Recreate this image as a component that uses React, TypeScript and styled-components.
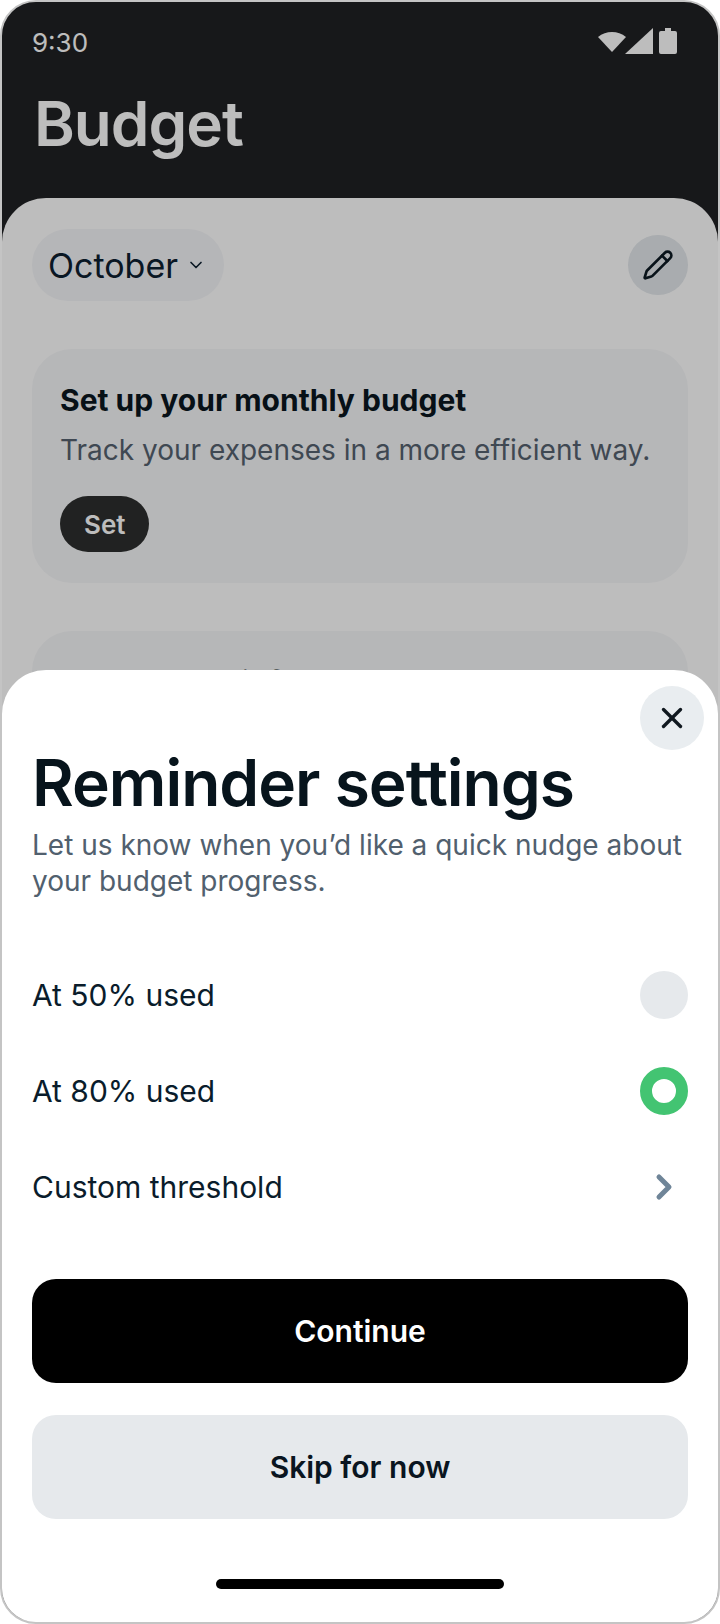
import React from 'react';
import styled, { createGlobalStyle } from 'styled-components';
import { ChevronDown, ChevronRight, Pencil, X } from 'lucide-react';

const GlobalStyle = createGlobalStyle`
  html, body {
    margin: 0;
    padding: 0;
    background: #fff;
    font-family: Inter, "Noto Sans", sans-serif;
  }
  * {
    box-sizing: border-box;
  }
`;

const Phone = styled.div`
  position: relative;
  width: 720px;
  height: 1624px;
  overflow: hidden;
  border: 2px solid #c4c4c4;
  border-radius: 36px;
  background: #202124;
`;

const Page = styled.div`
  display: flex;
  flex-direction: column;
  height: 100%;
`;

const StatusBar = styled.div`
  display: flex;
  align-items: center;
  justify-content: space-between;
  padding: 22px 38px 0 30px;
  height: 58px;
  color: #fff;
`;

const Clock = styled.span`
  font-size: 26px;
  font-weight: 400;
`;

const Header = styled.h1`
  margin: 0;
  padding: 26px 32px 0;
  height: 138px;
  font-size: 62px;
  line-height: 76px;
  font-weight: 600;
  letter-spacing: -1px;
  color: #fff;
`;

const Sheet = styled.div`
  flex: 1;
  padding: 31px 30px 0;
  background: #ffffff;
  border-radius: 44px 44px 0 0;
`;

const SheetTop = styled.div`
  display: flex;
  align-items: center;
  justify-content: space-between;
  margin-bottom: 48px;
`;

const MonthPill = styled.div`
  display: flex;
  align-items: center;
  gap: 8px;
  height: 72px;
  padding: 0 18px 0 16px;
  border-radius: 36px;
  background: #f5f6f9;
  font-size: 34px;
  color: #0d2030;
`;

const EditButton = styled.div`
  display: flex;
  align-items: center;
  justify-content: center;
  width: 60px;
  height: 60px;
  border-radius: 50%;
  background: #e4e8ec;
  color: #0d1a24;
`;

const Card = styled.div`
  padding: 32px 28px 28px;
  margin-bottom: 48px;
  height: 234px;
  border-radius: 40px;
  background: #f6f7f9;
`;

const CardTitle = styled.div`
  font-size: 30px;
  line-height: 38px;
  font-weight: 700;
  color: #0a1620;
`;

const CardText = styled.div`
  margin-top: 13px;
  font-size: 28px;
  line-height: 36px;
  color: #55626f;
`;

const SetButton = styled.div`
  display: inline-flex;
  align-items: center;
  height: 56px;
  margin-top: 28px;
  padding: 0 24px;
  border-radius: 28px;
  background: #2d2f2e;
  color: #fff;
  font-size: 26px;
  font-weight: 600;
`;

const Scrim = styled.div`
  position: absolute;
  inset: 0;
  background: rgba(0, 0, 0, 0.26);
`;

const Modal = styled.div`
  position: absolute;
  left: 0;
  right: 0;
  top: 668px;
  bottom: 0;
  display: flex;
  flex-direction: column;
  padding: 0 30px;
  background: #fff;
  border-radius: 44px 44px 0 0;
`;

const CloseButton = styled.div`
  position: absolute;
  top: 16px;
  right: 14px;
  display: flex;
  align-items: center;
  justify-content: center;
  width: 64px;
  height: 64px;
  border-radius: 50%;
  background: #e9edf0;
  color: #10181f;
`;

const ModalTitle = styled.h2`
  margin: 78px 0 0;
  font-size: 64px;
  line-height: 70px;
  font-weight: 600;
  letter-spacing: -1px;
  color: #07141c;
`;

const ModalText = styled.p`
  margin: 9px 0 0;
  font-size: 28px;
  line-height: 36px;
  color: #51606e;
`;

const Options = styled.div`
  display: flex;
  flex-direction: column;
  margin-top: 48px;
`;

const OptionRow = styled.div`
  display: flex;
  align-items: center;
  justify-content: space-between;
  height: 96px;
  font-size: 30px;
  color: #0a1c2b;
`;

const Radio = styled.span<{ $on?: boolean }>`
  width: 48px;
  height: 48px;
  border-radius: 50%;
  background: ${p => (p.$on ? '#fff' : '#e6e9ec')};
  border: ${p => (p.$on ? '12px solid #43c472' : 'none')};
`;

const ChevronSlot = styled.span`
  display: flex;
  justify-content: center;
  width: 48px;
  color: #6f8598;
`;

const Actions = styled.div`
  display: flex;
  flex-direction: column;
  gap: 32px;
  margin-top: 44px;
`;

const ActionButton = styled.div<{ $primary?: boolean }>`
  display: flex;
  align-items: center;
  justify-content: center;
  height: 104px;
  border-radius: 24px;
  font-size: 30px;
  font-weight: 600;
  background: ${p => (p.$primary ? '#000' : '#e6e9ec')};
  color: ${p => (p.$primary ? '#fff' : '#0a1520')};
`;

const HomeBar = styled.div`
  position: absolute;
  left: 214px;
  bottom: 33px;
  width: 288px;
  height: 10px;
  border-radius: 5px;
  background: #000;
`;

const StatusIcons = () => (
  <svg width="84" height="28" viewBox="0 0 84 28" fill="#fff">
    <path d="M2 9c4-3.500 9-5 14-5s10 1.500 14 5L16 24z" />
    <path d="M29 26 L57 0v26z" />
    <path d="M65 26a2 2 0 0 1-2-2V5a2 2 0 0 1 2-2h4V0h6v3h4a2 2 0 0 1 2 2v19a2 2 0 0 1-2 2z" />
  </svg>
);

const App: React.FC = () => (
  <>
    <GlobalStyle />
    <Phone>
      <Page>
        <StatusBar>
          <Clock>9:30</Clock>
          <StatusIcons />
        </StatusBar>
        <Header>Budget</Header>
        <Sheet>
          <SheetTop>
            <MonthPill>
              October
              <ChevronDown size={20} strokeWidth={2} />
            </MonthPill>
            <EditButton>
              <Pencil size={32} strokeWidth={2} />
            </EditButton>
          </SheetTop>
          <Card>
            <CardTitle>Set up your monthly budget</CardTitle>
            <CardText>Track your expenses in a more efficient way.</CardText>
            <SetButton>Set</SetButton>
          </Card>
          <Card>
            <CardTitle>Set planned inflows</CardTitle>
          </Card>
        </Sheet>
      </Page>
      <Scrim />
      <Modal>
        <CloseButton>
          <X size={34} strokeWidth={2.4} />
        </CloseButton>
        <ModalTitle>Reminder settings</ModalTitle>
        <ModalText>
          Let us know when you’d like a quick nudge about
          <br />
          your budget progress.
        </ModalText>
        <Options>
          <OptionRow>
            At 50% used
            <Radio />
          </OptionRow>
          <OptionRow>
            At 80% used
            <Radio $on />
          </OptionRow>
          <OptionRow>
            Custom threshold
            <ChevronSlot>
              <ChevronRight size={40} strokeWidth={3} />
            </ChevronSlot>
          </OptionRow>
        </Options>
        <Actions>
          <ActionButton $primary>Continue</ActionButton>
          <ActionButton>Skip for now</ActionButton>
        </Actions>
        <HomeBar />
      </Modal>
    </Phone>
  </>
);

export default App;
